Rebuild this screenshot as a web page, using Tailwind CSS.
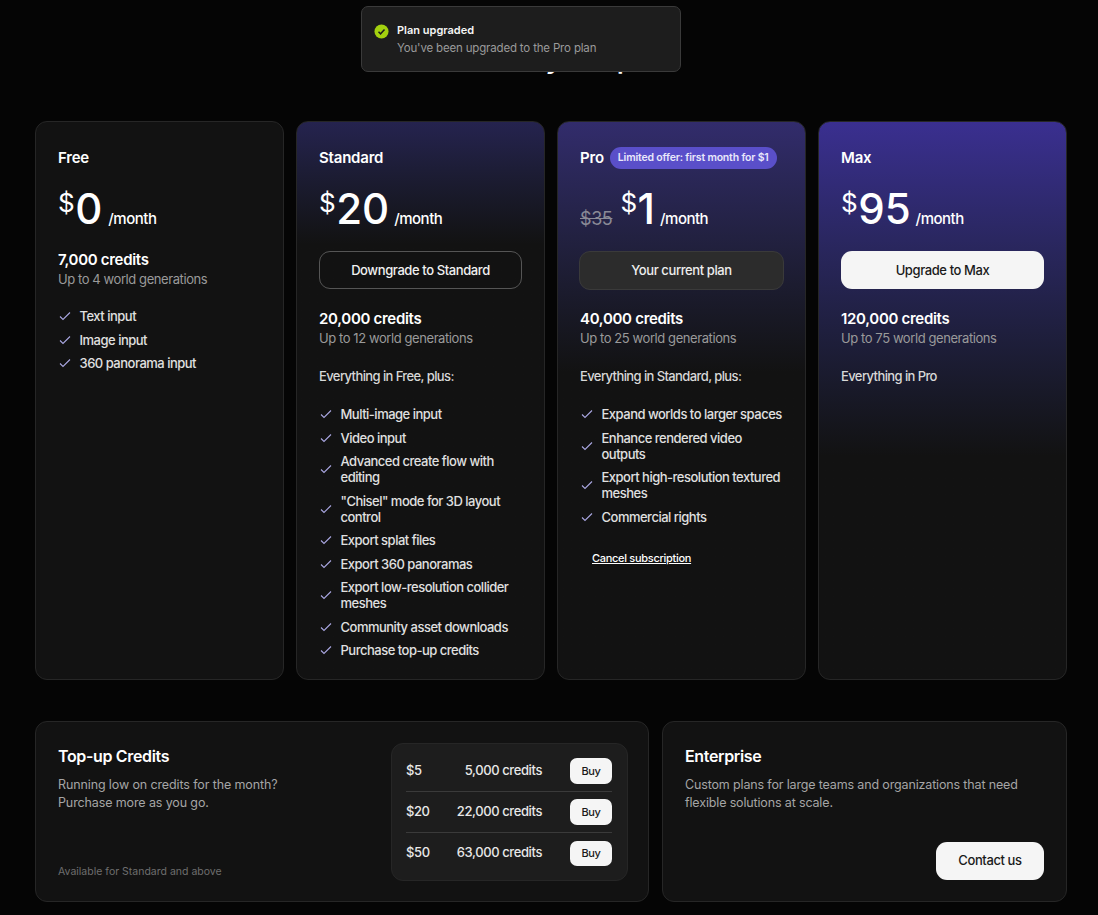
<!DOCTYPE html>
<html lang="en">
<head>
    <meta charset="UTF-8">
    <title>Choose your plan</title>
    <script src="https://cdn.jsdelivr.net/npm/@tailwindcss/browser@4"></script>
</head>
<body class="bg-[#050505] font-['Inter',sans-serif] text-white h-[915px] overflow-hidden relative">
    <!-- Toast -->
    <div class="absolute left-[361px] top-[6px] w-[320px] h-[66px] z-10 flex gap-[8px] pl-[12px] pt-[16px] bg-[#1d1d1d] border border-[#3a3a3a] rounded-[7px]">
        <svg class="w-[15px] h-[15px] mt-[1px] shrink-0" viewBox="0 0 16 16"><circle cx="8" cy="8" r="7.5" fill="#a3d10f"/><path d="M4.8 8.3l2.2 2.2 4.2-4.6" fill="none" stroke="#1d1d1d" stroke-width="1.6"/></svg>
        <div>
            <div class="text-[11px] leading-[15px] font-semibold text-[#f5f5f5]">Plan upgraded</div>
            <div class="text-[11.5px] leading-[15px] mt-[3px] tracking-[-0.17px] text-[#9a9a9a]">You've been upgraded to the Pro plan</div>
        </div>
    </div>

    <main class="pl-[35px] pr-[31px]">
        <h1 class="h-[121px] pt-[39px] pl-[4px] text-center text-[30px] leading-[36px] font-medium tracking-[-0.3px]">Choose your plan</h1>

        <!-- Plans -->
        <div class="grid grid-cols-4 gap-[12px] h-[559px]">
            <!-- Free -->
            <div class="rounded-[12px] border border-[#262626] bg-[#121212] px-[22px] pt-[24px]">
                <div class="text-[15px] leading-[24px] font-semibold tracking-[-0.2px]">Free</div>
                <div class="flex items-end mt-[12px] h-[48px]">
                    <span class="text-[26px] leading-[32px] self-start mt-[5px]">$</span>
                    <span class="text-[42px] leading-[48px] font-medium ml-[0.5px] -mb-[3px]">0</span>
                    <span class="text-[15px] leading-[20px] font-medium tracking-[-0.5px] ml-[6px] mb-[1px]">/month</span>
                </div>
                <div class="mt-[20px] text-[15px] leading-[20px] font-semibold tracking-[-0.3px]">7,000 credits</div>
                <div class="-mt-[1px] text-[13px] leading-[20px] tracking-[-0.42px] text-[#9a9a9a]">Up to 4 world generations</div>
                <ul class="mt-[19px] flex flex-col gap-[7.5px] text-[13px] leading-[16px] font-medium tracking-[-0.5px] text-[#e0e0e0]">
                    <li class="flex items-center gap-[8.5px]"><svg class="w-[12px] h-[12px] ml-[1px] shrink-0" viewBox="0 0 12 12"><path d="M1 6.5l3 3 7-7" fill="none" stroke="#a9a6e0" stroke-width="1.1"/></svg>Text input</li>
                    <li class="flex items-center gap-[8.5px]"><svg class="w-[12px] h-[12px] ml-[1px] shrink-0" viewBox="0 0 12 12"><path d="M1 6.5l3 3 7-7" fill="none" stroke="#a9a6e0" stroke-width="1.1"/></svg>Image input</li>
                    <li class="flex items-center gap-[8.5px]"><svg class="w-[12px] h-[12px] ml-[1px] shrink-0" viewBox="0 0 12 12"><path d="M1 6.5l3 3 7-7" fill="none" stroke="#a9a6e0" stroke-width="1.1"/></svg>360 panorama input</li>
                </ul>
            </div>

            <!-- Standard -->
            <div class="rounded-[12px] border border-[#262626] bg-linear-to-b from-[#25234f] to-[#121212] to-[22%] px-[22px] pt-[24px]">
                <div class="text-[15px] leading-[24px] font-semibold tracking-[-0.2px]">Standard</div>
                <div class="flex items-end mt-[12px] h-[48px]">
                    <span class="text-[26px] leading-[32px] self-start mt-[5px]">$</span>
                    <span class="text-[42px] leading-[48px] font-medium ml-[0.5px] -mb-[3px]">20</span>
                    <span class="text-[15px] leading-[20px] font-medium tracking-[-0.5px] ml-[5px] mb-[1px]">/month</span>
                </div>
                <button class="mt-[21px] w-full h-[38px] pt-[1px] rounded-[11px] border border-[#555] text-[13px] font-medium tracking-[-0.4px] text-[#f0f0f0]">Downgrade to Standard</button>
                <div class="mt-[20px] text-[15px] leading-[20px] font-semibold tracking-[-0.3px]">20,000 credits</div>
                <div class="-mt-[1px] text-[13px] leading-[20px] tracking-[-0.42px] text-[#9a9a9a]">Up to 12 world generations</div>
                <div class="mt-[18px] text-[13px] leading-[20px] font-medium tracking-[-0.6px] text-[#d8d8d8]">Everything in Free, plus:</div>
                <ul class="mt-[20px] flex flex-col gap-[7.5px] text-[13px] leading-[16px] font-medium tracking-[-0.5px] text-[#e0e0e0]">
                    <li class="flex items-center gap-[8.5px]"><svg class="w-[12px] h-[12px] ml-[1px] shrink-0" viewBox="0 0 12 12"><path d="M1 6.5l3 3 7-7" fill="none" stroke="#a9a6e0" stroke-width="1.1"/></svg>Multi-image input</li>
                    <li class="flex items-center gap-[8.5px]"><svg class="w-[12px] h-[12px] ml-[1px] shrink-0" viewBox="0 0 12 12"><path d="M1 6.5l3 3 7-7" fill="none" stroke="#a9a6e0" stroke-width="1.1"/></svg>Video input</li>
                    <li class="flex items-center gap-[8.5px]"><svg class="w-[12px] h-[12px] ml-[1px] shrink-0" viewBox="0 0 12 12"><path d="M1 6.5l3 3 7-7" fill="none" stroke="#a9a6e0" stroke-width="1.1"/></svg>Advanced create flow with editing</li>
                    <li class="flex items-center gap-[8.5px]"><svg class="w-[12px] h-[12px] ml-[1px] shrink-0" viewBox="0 0 12 12"><path d="M1 6.5l3 3 7-7" fill="none" stroke="#a9a6e0" stroke-width="1.1"/></svg>"Chisel" mode for 3D layout control</li>
                    <li class="flex items-center gap-[8.5px]"><svg class="w-[12px] h-[12px] ml-[1px] shrink-0" viewBox="0 0 12 12"><path d="M1 6.5l3 3 7-7" fill="none" stroke="#a9a6e0" stroke-width="1.1"/></svg>Export splat files</li>
                    <li class="flex items-center gap-[8.5px]"><svg class="w-[12px] h-[12px] ml-[1px] shrink-0" viewBox="0 0 12 12"><path d="M1 6.5l3 3 7-7" fill="none" stroke="#a9a6e0" stroke-width="1.1"/></svg>Export 360 panoramas</li>
                    <li class="flex items-center gap-[8.5px]"><svg class="w-[12px] h-[12px] ml-[1px] shrink-0" viewBox="0 0 12 12"><path d="M1 6.5l3 3 7-7" fill="none" stroke="#a9a6e0" stroke-width="1.1"/></svg>Export low-resolution collider meshes</li>
                    <li class="flex items-center gap-[8.5px]"><svg class="w-[12px] h-[12px] ml-[1px] shrink-0" viewBox="0 0 12 12"><path d="M1 6.5l3 3 7-7" fill="none" stroke="#a9a6e0" stroke-width="1.1"/></svg>Community asset downloads</li>
                    <li class="flex items-center gap-[8.5px]"><svg class="w-[12px] h-[12px] ml-[1px] shrink-0" viewBox="0 0 12 12"><path d="M1 6.5l3 3 7-7" fill="none" stroke="#a9a6e0" stroke-width="1.1"/></svg>Purchase top-up credits</li>
                </ul>
            </div>

            <!-- Pro -->
            <div class="rounded-[12px] border border-[#262626] bg-linear-to-b from-[#322c6c] to-[#121212] to-[45%] px-[22px] pt-[24px]">
                <div class="flex items-center gap-[6px]">
                    <span class="text-[15px] leading-[24px] font-semibold tracking-[-0.2px]">Pro</span>
                    <span class="h-[22px] px-[8px] -mt-[1px] rounded-full bg-[#5a4fc9] text-[10.5px] leading-[22px] font-semibold tracking-[-0.18px] text-[#e9e8fb] whitespace-nowrap">Limited offer: first month for $1</span>
                </div>
                <div class="flex items-end mt-[12px] h-[48px]">
                    <span class="text-[18px] leading-[20px] tracking-[-0.4px] mb-[1px] mr-[8px] line-through text-[#8a8a96]">$35</span>
                    <span class="text-[26px] leading-[32px] self-start mt-[5px]">$</span>
                    <span class="text-[42px] leading-[48px] font-medium ml-[0.5px] -mb-[3px]">1</span>
                    <span class="text-[15px] leading-[20px] font-medium tracking-[-0.5px] ml-[5px] mb-[1px]">/month</span>
                </div>
                <button class="mt-[21px] -ml-[1px] w-[205px] h-[39px] rounded-[11px] border border-[#3a3a3a] bg-[#2c2c2c] text-[13px] font-medium tracking-[-0.4px] text-[#eee]">Your current plan</button>
                <div class="mt-[19px] text-[15px] leading-[20px] font-semibold tracking-[-0.3px]">40,000 credits</div>
                <div class="-mt-[1px] text-[13px] leading-[20px] tracking-[-0.42px] text-[#9a9a9a]">Up to 25 world generations</div>
                <div class="mt-[18px] text-[13px] leading-[20px] font-medium tracking-[-0.6px] text-[#d8d8d8]">Everything in Standard, plus:</div>
                <ul class="mt-[20px] flex flex-col gap-[7.5px] text-[13px] leading-[16px] font-medium tracking-[-0.5px] text-[#e0e0e0]">
                    <li class="flex items-center gap-[8.5px]"><svg class="w-[12px] h-[12px] ml-[1px] shrink-0" viewBox="0 0 12 12"><path d="M1 6.5l3 3 7-7" fill="none" stroke="#a9a6e0" stroke-width="1.1"/></svg>Expand worlds to larger spaces</li>
                    <li class="flex items-center gap-[8.5px]"><svg class="w-[12px] h-[12px] ml-[1px] shrink-0" viewBox="0 0 12 12"><path d="M1 6.5l3 3 7-7" fill="none" stroke="#a9a6e0" stroke-width="1.1"/></svg>Enhance rendered video outputs</li>
                    <li class="flex items-center gap-[8.5px]"><svg class="w-[12px] h-[12px] ml-[1px] shrink-0" viewBox="0 0 12 12"><path d="M1 6.5l3 3 7-7" fill="none" stroke="#a9a6e0" stroke-width="1.1"/></svg>Export high-resolution textured meshes</li>
                    <li class="flex items-center gap-[8.5px]"><svg class="w-[12px] h-[12px] ml-[1px] shrink-0" viewBox="0 0 12 12"><path d="M1 6.5l3 3 7-7" fill="none" stroke="#a9a6e0" stroke-width="1.1"/></svg>Commercial rights</li>
                </ul>
                <a class="block mt-[25px] ml-[12px] text-[11px] leading-[16px] font-medium tracking-[-0.3px] underline">Cancel subscription</a>
            </div>

            <!-- Max -->
            <div class="rounded-[12px] border border-[#262626] bg-linear-to-b from-[#3a2f90] to-[#121212] to-[60%] px-[22px] pt-[24px]">
                <div class="text-[15px] leading-[24px] font-semibold tracking-[-0.2px]">Max</div>
                <div class="flex items-end mt-[12px] h-[48px]">
                    <span class="text-[26px] leading-[32px] self-start mt-[5px]">$</span>
                    <span class="text-[42px] leading-[48px] font-medium ml-[0.5px] -mb-[3px]">95</span>
                    <span class="text-[15px] leading-[20px] font-medium tracking-[-0.5px] ml-[5px] mb-[1px]">/month</span>
                </div>
                <button class="mt-[21px] w-full h-[38px] pt-[1px] rounded-[11px] bg-[#f5f5f5] text-[13px] font-medium tracking-[-0.4px] text-[#1a1a1a]">Upgrade to Max</button>
                <div class="mt-[20px] text-[15px] leading-[20px] font-semibold tracking-[-0.3px]">120,000 credits</div>
                <div class="-mt-[1px] text-[13px] leading-[20px] tracking-[-0.42px] text-[#9a9a9a]">Up to 75 world generations</div>
                <div class="mt-[18px] text-[13px] leading-[20px] font-medium tracking-[-0.6px] text-[#d8d8d8]">Everything in Pro</div>
            </div>
        </div>

        <!-- Bottom row -->
        <div class="mt-[41px] flex gap-[13px] h-[181px]">
            <div class="w-[614px] rounded-[12px] border border-[#262626] bg-[#121212] pl-[22px] pr-[20px] flex justify-between">
                <div class="flex flex-col pt-[22px] pb-[21px]">
                    <div class="text-[16px] leading-[24px] font-semibold tracking-[-0.35px]">Top-up Credits</div>
                    <p class="mt-[8px] text-[12.5px] leading-[18px] tracking-[-0.12px] text-[#a5a5a5]">Running low on credits for the month?<br>Purchase more as you go.</p>
                    <div class="mt-auto text-[10.5px] leading-[16px] text-[#6e6e6e]">Available for Standard and above</div>
                </div>
                <div class="w-[237px] h-[138px] mt-[21px] rounded-[12px] border border-[#262626] bg-[#1d1d1d] pl-[14px] pr-[15px] pt-[6px] text-[13px] font-medium tracking-[-0.4px] text-[#e8e8e8]">
                    <div class="h-[42px] pt-[8px] pb-[7px] flex items-center justify-between border-b border-[#3a3a3a]">
                        <span>$5</span>
                        <span class="ml-auto mr-[28px]">5,000 credits</span>
                        <button class="w-[42px] h-[26px] rounded-[7px] bg-[#f5f5f5] text-[11px] text-[#1a1a1a]">Buy</button>
                    </div>
                    <div class="h-[41px] flex items-center justify-between border-b border-[#3a3a3a]">
                        <span>$20</span>
                        <span class="ml-auto mr-[28px]">22,000 credits</span>
                        <button class="w-[42px] h-[26px] rounded-[7px] bg-[#f5f5f5] text-[11px] text-[#1a1a1a]">Buy</button>
                    </div>
                    <div class="h-[40px] flex items-center justify-between">
                        <span>$50</span>
                        <span class="ml-auto mr-[28px]">63,000 credits</span>
                        <button class="w-[42px] h-[25px] rounded-[7px] bg-[#f5f5f5] text-[11px] text-[#1a1a1a]">Buy</button>
                    </div>
                </div>
            </div>
            <div class="flex-1 rounded-[12px] border border-[#262626] bg-[#121212] pl-[22px] pr-[22px] pt-[22px] pb-[21px] flex flex-col">
                <div class="text-[16px] leading-[24px] font-semibold tracking-[-0.35px]">Enterprise</div>
                <p class="mt-[8px] text-[12.5px] leading-[18px] tracking-[-0.15px] text-[#a5a5a5]">Custom plans for large teams and organizations that need flexible solutions at scale.</p>
                <button class="mt-auto self-end w-[108px] h-[38px] rounded-[11px] bg-[#f5f5f5] text-[13px] font-medium tracking-[-0.4px] text-[#1a1a1a]">Contact us</button>
            </div>
        </div>
    </main>
</body>
</html>
